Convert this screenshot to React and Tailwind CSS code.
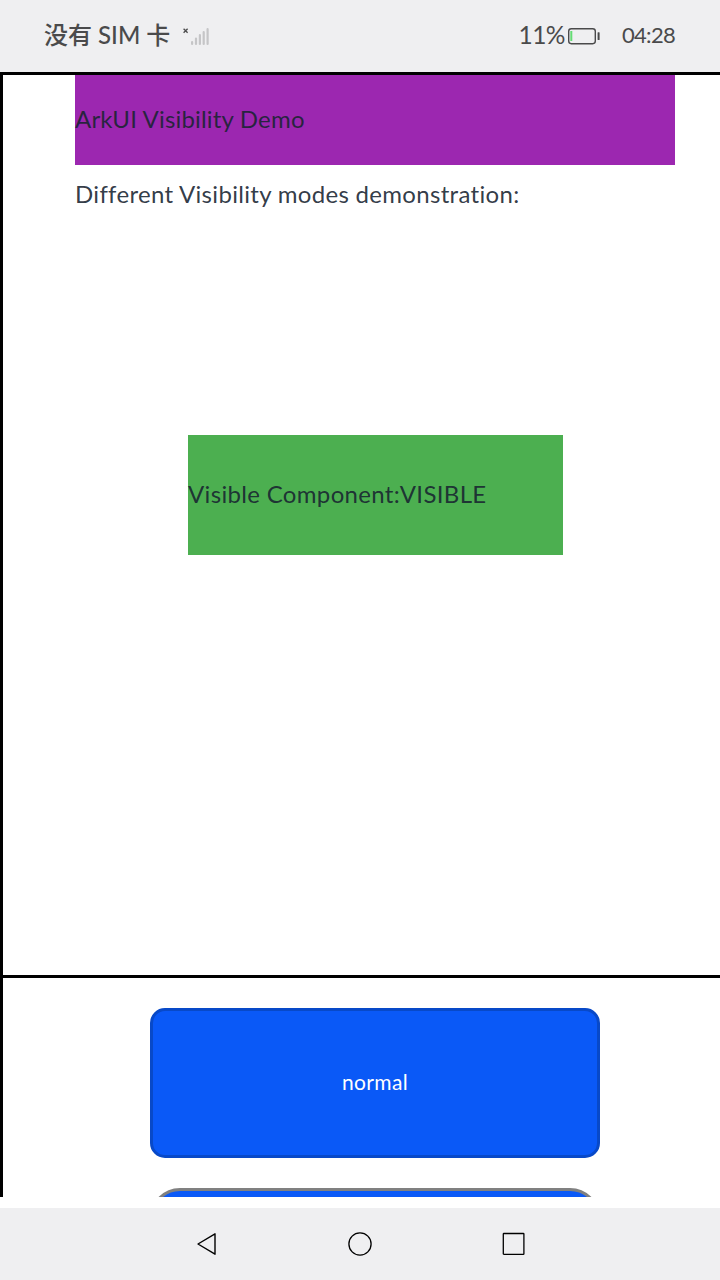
function StatusBar() {
  return (
    <header className="flex h-[72px] shrink-0 items-center bg-[#efeff1] pl-11 pr-11 text-[#4a4a4b]">
      <span className="w-[126px] whitespace-nowrap pb-0.5 text-[24px] font-medium leading-8">没有 SIM 卡</span>
      <svg className="ml-3 h-6 w-7 shrink-0" viewBox="0 0 28 24" fill="none">
        <path d="M1.6 4.8l4 4M5.6 4.8l-4 4" stroke="#4a4a4b" strokeWidth="1.3" />
        <path d="M10.1 18v2M14 14.6V20M17.9 11.2V20M21.7 8.2V20M25.6 5.2V20" stroke="#c5c5c7" strokeWidth="2.2" strokeLinecap="round" />
      </svg>
      <span className="ml-auto whitespace-nowrap pb-0.5 text-[24.5px] leading-8 tracking-[-0.5px]">11%</span>
      <svg className="ml-0.5 h-6 w-[34px] shrink-0" viewBox="0 0 34 24" fill="none">
        <rect x="1.7" y="4.7" width="26.6" height="15" rx="2.6" stroke="#4a4a4b" strokeWidth="1.4" />
        <rect x="3.3" y="7" width="2" height="10" fill="#64dc74" />
        <rect x="30.6" y="8.2" width="2" height="7.8" rx="0.6" fill="#4a4a4b" />
      </svg>
      <span className="ml-[21px] w-[54px] whitespace-nowrap pb-0.5 text-[22px] leading-8 tracking-[-0.7px]">04:28</span>
    </header>
  );
}

function NavBar() {
  return (
    <nav className="flex h-[72px] shrink-0 items-center justify-center gap-[130px] bg-[#efeff1]">
      <svg className="h-6 w-6" viewBox="0 0 24 24" fill="none" stroke="#000" strokeWidth="1.4" strokeLinejoin="round">
        <path d="M4 12L21 1.8v20.4z" />
      </svg>
      <svg className="h-6 w-6" viewBox="0 0 24 24" fill="none" stroke="#000" strokeWidth="1.3">
        <circle cx="12" cy="12" r="11.1" />
      </svg>
      <svg className="h-6 w-6" viewBox="0 0 24 24" fill="none" stroke="#000" strokeWidth="1.3">
        <rect x="1.3" y="1.5" width="20.6" height="20.8" rx="0.6" />
      </svg>
    </nav>
  );
}

export default function App() {
  return (
    <div className="flex h-[1280px] w-[720px] flex-col overflow-hidden bg-white font-['Lato','Noto_Sans_CJK_SC',sans-serif] text-[24px] leading-[30px] text-[#182431]/90">
      <StatusBar />
      <main className="h-[1125px] shrink-0 overflow-hidden border-l-[3px] border-black">
        <section className="flex h-[906px] flex-col border-y-[3px] border-black pl-[72px]">
          <h1 className="flex h-[90px] w-[600px] items-center bg-[#9c27b0] pb-0.5">
            <span className="whitespace-nowrap tracking-[0.18px]">ArkUI Visibility Demo</span>
          </h1>
          <p className="flex h-[60px] items-center whitespace-nowrap pb-0.5 tracking-[0.31px]">Different Visibility modes demonstration:</p>
          <div className="ml-[113px] mt-[210px] flex h-[120px] w-[375px] items-center bg-[#4caf50] pb-0.5">
            <span className="whitespace-nowrap tracking-[0.33px]">Visible Component:VISIBLE</span>
          </div>
        </section>
        <section className="flex flex-col gap-[30px] pl-[147px] pt-[30px]">
          <button className="h-[150px] w-[450px] shrink-0 rounded-[15px] border-[3px] border-[#0849c8] bg-[#0a59f7] pb-0.5 text-[21px] tracking-[0.35px] text-white">
            normal
          </button>
          <button className="h-[150px] w-[450px] shrink-0 rounded-[30px] border-[3px] border-[#808080] bg-[#0a59f7]" aria-label="More" />
        </section>
      </main>
      <div className="h-[11px] shrink-0" />
      <NavBar />
    </div>
  );
}
